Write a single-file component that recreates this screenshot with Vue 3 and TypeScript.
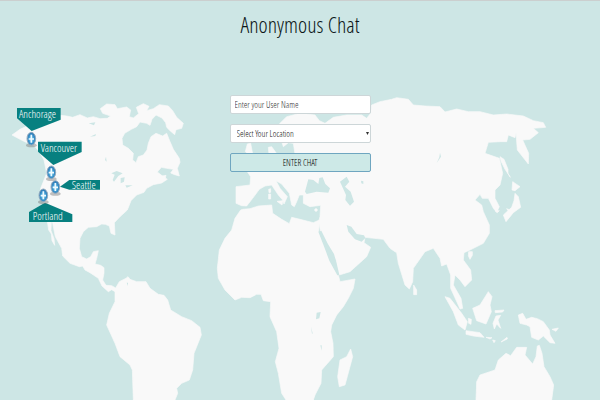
<script setup lang="ts">
import { ref } from 'vue'

interface Place {
  name: string
  flag: string
  textX: number
  textY: number
  pinX: number
  pinY: number
}

// Coordinates are in map units (1800 x 1200).
const places: Place[] = [
  { name: 'Anchorage', flag: '51,324 182,324 182,359 95,393 51,355', textX: 57, textY: 353, pinX: 94, pinY: 416 },
  { name: 'Vancouver', flag: '114,425 245,425 245,456 160,495 114,455', textX: 122, textY: 455, pinX: 154, pinY: 517 },
  { name: 'Seattle', flag: '180,560 208,540 300,540 300,569 208,569', textX: 215, textY: 566, pinX: 166, pinY: 561 },
  { name: 'Portland', flag: '87,636 135,608 217,643 217,666 87,666', textX: 98, textY: 660, pinX: 130, pinY: 586 },
]

const userName = ref('')
const location = ref('')
</script>

<template>
  <main class="page">
    <svg class="map" viewBox="0 0 1800 1200" preserveAspectRatio="xMidYMin slice" role="img" aria-label="World map">
      <defs>
        <radialGradient id="pin" cx="50%" cy="55%" r="60%">
          <stop offset="0" stop-color="#7fdcf2" />
          <stop offset=".55" stop-color="#3a93cc" />
          <stop offset="1" stop-color="#2c6ba6" />
        </radialGradient>
      </defs>
      <g class="land">
        <path d="M36 405L60 388L100 370L150 345L182 346L200 348L218 352L240 344L262 354L280 350L300 356L322 355L332 348L308 340L301 326L320 312L345 314L352 326L380 321L392 330L388 350L400 354L416 341L409 322L430 311L447 319L440 332L460 326L478 314L505 318L518 332L530 352L550 370L545 385L528 389L524 404L510 392L500 382L497 368L486 354L468 345L456 358L450 376L440 370L420 366L410 380L394 388L374 400L366 415L368 435L385 445L400 460L398 480L408 488L415 470L430 465L441 450L445 430L453 410L468 400L488 408L500 400L508 420L520 448L538 475L540 487L532 505L538 528L524 524L512 519L520 508L500 505L484 502L472 516L490 530L502 538L485 549L460 554L440 565L432 577L410 585L393 602L386 620L382 630L360 650L343 668L345 705L333 700L328 678L316 673L305 672L290 680L265 682L250 695L240 715L238 745L245 770L260 777L272 770L280 755L295 752L290 775L285 792L302 796L312 803L312 820L308 840L318 856L335 857L347 864L358 845L378 835L384 830L390 838L410 845L438 845L450 865L475 883L492 886L503 900L512 930L545 950L575 962L600 982L604 1005L596 1025L582 1060L578 1110L568 1140L545 1150L530 1165L533 1180L525 1200H400L397 1110L390 1095L360 1070L345 1030L320 975L328 940L345 905L345 875L335 869L325 875L306 858L295 835L270 818L255 810L248 798L238 800L210 790L188 768L185 745L166 710L158 670L145 645L128 600L122 565L140 520L132 480L118 455L100 434L76 426L60 418Z" />
        <path d="M142 664L146 690L154 702L156 722L164 736L162 716L153 692L154 664ZM475 530L498 526L496 534L476 538Z" />
        <path d="M728 628L750 626L775 618L815 615L818 640L845 658L868 671L875 652L900 658L940 668L958 660L956 695L975 740L990 780L1015 825L1020 845L1065 837L1060 865L1045 895L1030 920L1010 945L995 975L992 995L999 1030L1000 1070L965 1110L963 1150L945 1185L940 1200H858L845 1180L835 1120L826 1085L837 1045L830 995L810 950L812 905L790 902L783 883L770 883L750 893L725 892L705 900L675 870L655 835L652 805L658 750L675 715L695 690L705 655L722 630Z" />
        <path d="M708 560L708 610L725 617L740 618L758 595L778 568L795 558L815 555L835 585L848 600L852 612L862 590L840 565L828 542L845 552L868 580L875 615L883 620L890 605L898 585L910 585L910 610L930 620L962 616L960 650L956 665L962 695L985 735L1008 780L1018 825L1050 815L1100 770L1112 742L1092 728L1095 712L1150 718L1170 745L1185 755L1190 758L1195 790L1215 855L1228 867L1238 845L1240 805L1275 755L1300 745L1320 775L1325 798L1340 792L1352 825L1352 865L1368 900L1380 927L1388 925L1383 895L1360 855L1365 825L1380 840L1395 860L1415 840L1412 810L1390 780L1392 758L1410 750L1450 730L1468 700L1468 675L1450 635L1445 615L1425 600L1440 583L1447 595L1465 595L1480 625L1490 637L1498 620L1485 595L1485 570L1500 555L1508 520L1498 475L1455 460L1465 427L1500 425L1520 425L1525 405L1545 413L1548 398L1552 450L1585 492L1586 460L1568 420L1590 418L1615 398L1600 385L1637 382L1630 368L1600 362L1570 348L1520 342L1480 345L1440 335L1405 335L1370 327L1335 336L1320 320L1275 318L1240 315L1225 298L1190 293L1175 298L1140 305L1115 315L1112 340L1100 355L1085 345L1040 345L1000 352L975 370L958 362L945 345L900 340L860 350L840 370L820 395L826 420L842 415L850 440L865 428L880 430L885 462L840 475L815 440L805 442L808 475L765 510L740 512L752 530L750 555Z" />
        <path d="M742 432L752 430L758 462L775 490L740 500L748 465L736 455ZM831 604L849 602L846 615ZM806 568L812 566L812 577L807 578ZM806 582L812 582L812 597L806 597ZM882 582L888 594L880 590Z" />
        <circle cx="948" cy="630" r="4" />
        <path d="M1052 1047L1058 1070L1035 1155L1018 1160L1013 1130L1020 1080L1040 1070Z" />
        <path d="M1538 545L1560 560L1545 572L1536 570ZM1545 580L1555 590L1562 622L1540 638L1518 665L1510 645L1535 622L1542 602ZM1500 470L1512 478L1524 508L1524 520L1531 532L1515 508L1503 484Z" />
        <path d="M1406 755H1417V766L1410 778L1405 767ZM1241 855L1250 870V884L1241 884ZM1335 890L1350 895L1385 940L1402 965L1395 990L1375 975L1360 935ZM1398 992L1440 998L1452 1012L1420 1008L1398 1003ZM1418 925L1440 915L1465 875L1476 890L1470 915L1474 935L1458 972L1430 962ZM1485 932L1512 930L1508 936L1486 938ZM1488 948L1502 946L1494 960L1502 985L1490 972L1483 987L1479 970ZM1405 955L1414 958L1413 973L1406 970ZM1458 1012L1476 1013L1470 1017ZM1478 1020L1486 1022L1482 1028ZM1503 1026L1521 1012L1522 1017Z" />
        <path d="M1555 945L1568 940L1578 958L1595 952L1612 956L1630 965L1648 990L1650 1005L1665 1030L1650 1028L1630 1008L1615 1020L1595 1012L1590 980L1580 975L1560 970ZM1656 988L1675 984L1668 994ZM1520 626L1524 632L1528 629ZM1485 632L1492 638L1498 632Z" />
        <path d="M1428 1200L1430 1145L1440 1125L1485 1110L1495 1080L1518 1060L1532 1067L1550 1042L1580 1042L1575 1065L1598 1092L1608 1070L1612 1038L1618 1036L1626 1060L1632 1100L1650 1130L1661 1155L1655 1200Z" />
      </g>
      <g class="water">
        <path d="M915 575L925 538L940 540L955 552L958 534L968 532L976 552L990 565L985 578L950 575L920 582ZM1020 545L1040 530L1048 545L1035 560L1052 575L1062 605L1050 617L1036 600L1038 585ZM1083 542L1090 544L1090 552L1084 550ZM1040 675L1045 695L1065 718L1085 725L1096 714L1092 706L1070 702L1054 680Z" />
        <path d="M955 695L964 692L984 733L1002 762L1008 784L1018 826L1012 826L988 782L973 742Z" />
        <path d="M950 938L962 936L958 955L948 958ZM933 980L938 1000L936 1002ZM961 1036H965V1052ZM1320 458L1323 470L1310 489L1318 472ZM334 520L350 513L368 520L355 528L342 545L338 540L344 524ZM362 534L374 532L372 545L362 550ZM376 556L398 556L380 563ZM318 470L320 485L315 480ZM266 370L286 367L282 376ZM270 410L288 402L286 408ZM427 388L446 386L436 394ZM380 848H384V858Z" />
      </g>
      <g v-for="place in places" :key="place.name">
        <polygon class="flag" :points="place.flag" />
        <text class="place" :x="place.textX" :y="place.textY">{{ place.name }}</text>
        <ellipse class="shadow" :cx="place.pinX" :cy="place.pinY + 20" rx="16" ry="6" />
        <ellipse class="pin" :cx="place.pinX" :cy="place.pinY" rx="13" ry="19" fill="url(#pin)" />
        <path class="cross" :transform="`translate(${place.pinX} ${place.pinY})`" d="M0 -12V12M-8 1H8" />
      </g>
    </svg>

    <div class="content">
      <h1 class="title">Anonymous Chat</h1>
      <form class="form" @submit.prevent>
        <input v-model="userName" class="control" type="text" placeholder="Enter your User Name" aria-label="User name" />
        <div class="picker">
          <select v-model="location" class="control select" aria-label="Location">
            <option value="">Select Your Location</option>
            <option v-for="place in places" :key="place.name">{{ place.name }}</option>
          </select>
          <svg class="arrow" viewBox="0 0 4 4" aria-hidden="true"><path d="M0 0H4L2 4Z" /></svg>
        </div>
        <button class="control enter" type="submit">ENTER CHAT</button>
      </form>
    </div>
  </main>
</template>

<style>
body {
  margin: 0;
}
</style>

<style scoped>
.page {
  position: relative;
  box-sizing: border-box;
  min-height: 100vh;
  overflow: hidden;
  border-top: 1px solid #cbcfcf;
  background: #cde6e5;
  font-family: "Open Sans Condensed Light", "Open Sans Condensed", "Roboto Condensed", Lato, sans-serif;
  font-weight: 300;
}
.map {
  position: absolute;
  inset: -1px 0 0;
  width: 100%;
  height: calc(100% + 1px);
}
.land {
  fill: #f9f9f9;
  stroke: #f9f9f9;
  stroke-width: 2;
  stroke-linejoin: round;
}
.water {
  fill: #cde6e5;
}
.flag {
  fill: #078080;
}
.place {
  fill: #fff;
  font-size: 33px;
}
.shadow {
  fill: #777;
  opacity: .45;
}
.pin {
  stroke: #93acc0;
  stroke-width: 3;
}
.cross {
  fill: none;
  stroke: #effaff;
  stroke-width: 5;
}
.content {
  position: relative;
  display: flex;
  flex-direction: column;
  align-items: center;
  gap: 58px;
  padding-top: 10px;
}
.title {
  margin: 0;
  color: #0c1618;
  font-size: 22px;
  font-weight: inherit;
  line-height: 26px;
}
.form {
  display: flex;
  flex-direction: column;
  gap: 10px;
  width: 23.5%;
  min-width: 141px;
}
.picker {
  position: relative;
  display: flex;
}
.control {
  box-sizing: border-box;
  width: 100%;
  height: 19px;
  margin: 0;
  padding: 0 4px;
  border: 1px solid #cdd6d8;
  border-radius: 2px;
  background: #fff;
  color: #111;
  font-family: inherit;
  font-size: 9px;
  font-weight: inherit;
  line-height: 17px;
}
.control::placeholder {
  color: #333;
  opacity: 1;
}
.select {
  appearance: none;
  padding: 0 6px;
}
.arrow {
  position: absolute;
  top: 8px;
  right: 2px;
  width: 3px;
  height: 3px;
  fill: #333;
}
.enter {
  border-color: #6fa6c0;
  background: #cde9e7;
  color: #000;
  text-align: center;
}
</style>
